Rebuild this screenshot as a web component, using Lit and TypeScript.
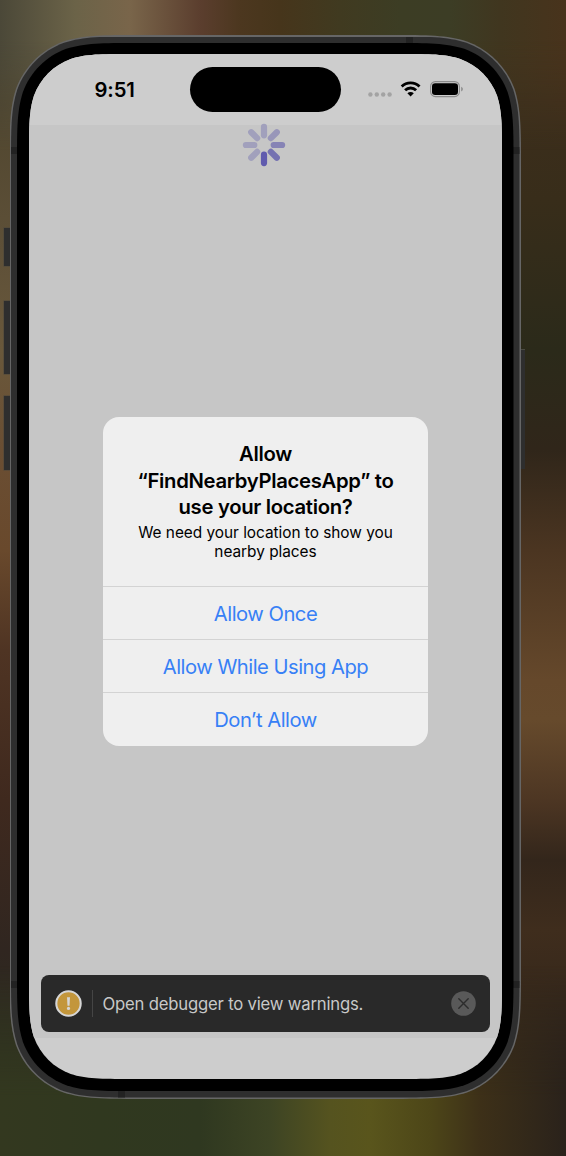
import { LitElement, html, css, svg, unsafeCSS } from "lit";
import { customElement } from "lit/decorators.js";

/** Outline of a rectangle with continuous-curvature corners. */
function squircle(w: number, h: number, r: number) {
  const a = 1.52866 * r, b = 1.08849 * r, c = 0.86841 * r, d = 0.63149 * r;
  const e = 0.07491 * r, f = 0.37282 * r, g = 0.16906 * r;
  const p = (...n: number[]) => n.map((v) => v.toFixed(2)).join(" ");
  return unsafeCSS(
    `path("M${p(a, 0)} L${p(w - a, 0)}` +
      `C${p(w - b, 0, w - c, 0, w - d, e)}C${p(w - f, g, w - g, f, w - e, d)}C${p(w, c, w, b, w, a)}` +
      `L${p(w, h - a)}C${p(w, h - b, w, h - c, w - e, h - d)}C${p(w - g, h - f, w - f, h - g, w - d, h - e)}C${p(w - c, h, w - b, h, w - a, h)}` +
      `L${p(a, h)}C${p(b, h, c, h, d, h - e)}C${p(f, h - g, g, h - f, e, h - d)}C${p(0, h - c, 0, h - b, 0, h - a)}` +
      `L${p(0, a)}C${p(0, b, 0, c, e, d)}C${p(g, f, f, g, d, e)}C${p(c, 0, b, 0, a, 0)}Z")`
  );
}

@customElement("status-bar")
class StatusBar extends LitElement {
  static styles = css`
    :host { display: flex; height: 71px; background: #cdcdcd; position: relative; }
    .time { width: 161px; padding: 21.5px 0 0 65.5px; box-sizing: border-box; font-size: 20.3px; line-height: 28px; font-weight: 600; letter-spacing: -0.15px; }
    .island { width: 151px; height: 44.5px; margin-top: 13px; border-radius: 23px; background: #000; }
    svg { display: block; width: 161px; height: 71px; }
  `;
  render() {
    return html`
      <div class="time">9:51</div>
      <div class="island"></div>
      <svg viewBox="341 54 161 71">
        <g fill="#a3a3a3">
          ${[370.4, 376.8, 383.2, 389.6].map((x) => svg`<circle cx=${x} cy="94.5" r="2.2" />`)}
        </g>
        <g fill="none" stroke="#000" stroke-width="2.9">
          <path d="M401.7 86.5a12.8 12.8 0 0 1 17.8 0" />
          <path d="M405.1 90.2a7.9 7.9 0 0 1 11 0" />
        </g>
        <path d="M410.6 96.6l-3.2-3.3a4.6 4.6 0 0 1 6.4 0z" />
        <rect x="430.6" y="81.6" width="28.8" height="15" rx="4.8" fill="none" stroke="#8b8b8b" stroke-width="1.1" />
        <rect x="432" y="83.2" width="26" height="11.8" rx="3.2" />
        <path d="M461.2 86.8q1.7.7 1.7 2.3t-1.7 2.3z" fill="#8b8b8b" />
      </svg>
    `;
  }
}

@customElement("activity-spinner")
class ActivitySpinner extends LitElement {
  static styles = css`
    :host, svg { display: block; width: 44px; height: 44px; }
  `;
  render() {
    const shades = ["#a1a0bc", "#9896b9", "#8683b5", "#7572b1", "#605bae", "#a1a0bc", "#a1a0bc", "#a1a0bc"];
    return html`<svg viewBox="-22 -22 44 44">
      ${shades.map((c, i) => svg`<rect x="-3.1" y="-21.2" width="6.2" height="14.6" rx="3.1" fill=${c} transform="rotate(${i * 45})" />`)}
    </svg>`;
  }
}

@customElement("permission-alert")
class PermissionAlert extends LitElement {
  static styles = css`
    :host { display: block; width: 325px; height: 328.6px; border-radius: 16px; background: #efefef; overflow: hidden; text-align: center; }
    .message { height: 168.6px; box-sizing: border-box; padding-top: 23.9px; }
    .title { font-size: 20.3px; line-height: 26.4px; font-weight: 600; letter-spacing: -0.32px; white-space: nowrap; }
    .body { margin-top: 3px; font-size: 15.4px; line-height: 19px; white-space: nowrap; letter-spacing: -0.03px; }
    .action { height: 53.33px; box-sizing: border-box; border-top: 1px solid #d3d3d3; color: #3780f6; font-size: 20.2px; line-height: 53px; letter-spacing: -0.5px; white-space: nowrap; }
  `;
  render() {
    return html`
      <div class="message">
        <div class="title">Allow<br />“FindNearbyPlacesApp” to<br />use your location?</div>
        <div class="body">We need your location to show you<br />nearby places</div>
      </div>
      ${["Allow Once", "Allow While Using App", "Don’t Allow"].map((t) => html`<div class="action">${t}</div>`)}
    `;
  }
}

@customElement("debug-toast")
class DebugToast extends LitElement {
  static styles = css`
    :host { display: flex; align-items: center; height: 57px; box-sizing: border-box; padding: 0.5px 14px 0; border-radius: 8px; background: #292929; color: #c8c8c8; }
    svg { display: block; flex: none; }
    .rule { width: 1px; height: 27px; margin: 0 10px 0 9.5px; background: #454545; }
    .text { flex: 1; font-size: 16.7px; line-height: 24px; letter-spacing: -0.2px; white-space: nowrap; }
  `;
  render() {
    return html`
      <svg width="27" height="27" viewBox="0 0 27 27">
        <circle cx="13.5" cy="13.5" r="12.2" fill="#c3963b" stroke="#d6d6d6" stroke-width="2.1" />
        <path d="M12 7.3h3l-.5 8.4h-2z" fill="#d6d6d6" />
        <circle cx="13.5" cy="18.4" r="1.6" fill="#d6d6d6" />
      </svg>
      <div class="rule"></div>
      <div class="text">Open debugger to view warnings.</div>
      <svg width="25" height="25" viewBox="0 0 25 25">
        <circle cx="12.5" cy="12.5" r="12.3" fill="#595959" />
        <path d="M7.8 7.8l9.4 9.4M17.2 7.8l-9.4 9.4" stroke="#2c2c2c" stroke-width="1.4" stroke-linecap="round" />
      </svg>
    `;
  }
}

@customElement("app-root")
class AppRoot extends LitElement {
  static styles = css`
    :host { display: block; position: relative; width: 566px; height: 1156px; overflow: hidden; box-sizing: border-box; padding: 35px 0 0 9.5px; font-family: Inter, "Liberation Sans", sans-serif; color: #000; background: #33291c; }
    .wall { position: absolute; }
    .left { inset: 0 283px 0 0; background: linear-gradient(#4b4838 0, #50462f 100px, #5e5038 250px, #69583b 350px, #6a4e33 450px, #69492c 550px, #4f3423 650px, #3f291e 800px, #302620 950px, #2c2c20 1050px, #333822 1156px); }
    .right { inset: 0 0 0 283px; background: linear-gradient(#48331c 0, #3c2e1c 100px, #382d1a 200px, #2b2a1a 350px, #30261a 450px, #4b3521 550px, #65482b 680px, #664a2c 720px, #4d3623 800px, #33261b 860px, #3f2d1d 930px, #36281b 1000px, #2c231b 1100px); }
    .top { inset: 0 0 auto 0; height: 150px; background: linear-gradient(90deg, #4b4838 0, #6b6348 75px, #79654a 130px, #5b3e2e 200px, #4c371f 240px, #46351b 280px, #403a20 340px, #3c3d24 400px, #3c3d25 450px, #40361f 500px, #48331c 566px); mask-image: linear-gradient(#000 40px, transparent); }
    .bottom { inset: auto 0 0 0; height: 190px; background: linear-gradient(90deg, #33381f 0, #30381f 100px, #2f3820 200px, #3d4424 270px, #55531f 330px, #59551c 370px, #4d4618 430px, #3d3018 480px, #2a221b 566px); mask-image: linear-gradient(transparent, #000 130px); }
    .key { position: absolute; background: #2e2e2e; box-shadow: 0 0 0 0.5px #4a463c; }
    .k1 { left: 4px; top: 228px; width: 7px; height: 38px; }
    .k2 { left: 4px; top: 301px; width: 7px; height: 73px; }
    .k3 { left: 4px; top: 396px; width: 7px; height: 74px; }
    .k4 { left: 518px; top: 350px; width: 6.5px; height: 118.5px; box-shadow: 0 -1px 0 #4a4a42; }
    .rim { position: relative; width: 511.5px; height: 1064px; box-sizing: border-box; padding: 1.5px; background: #666; clip-path: ${squircle(511.5, 1064, 85.5)}; }
    .frame { position: relative; width: 508.5px; height: 1061px; box-sizing: border-box; padding: 6.5px 6px; background: #2e2e2e; clip-path: ${squircle(508.5, 1061, 84)}; }
    .bezel { position: relative; width: 496.5px; height: 1048px; box-sizing: border-box; padding: 11px 12px 12px; background: #000; clip-path: ${squircle(496.5, 1048, 78)}; }
    .screen { display: flex; flex-direction: column; position: relative; width: 473px; height: 1025px; background: #cdcdcd; clip-path: ${squircle(473, 1025, 66)}; }
    .content { height: 913px; display: flex; align-items: center; justify-content: center; background: #c6c6c6; }
    .spinner { position: absolute; left: 213px; top: 69px; }
    .toast { position: absolute; left: 12px; right: 12px; top: 921px; }
    .band { position: absolute; background: #222; }
    .b1 { left: 395px; top: 0; width: 7px; height: 7px; }
    .b2 { left: 107px; bottom: 0; width: 7px; height: 7px; }
    .b3 { left: 0; right: 0; top: 110.5px; height: 7px; }
    .b4 { left: 0; right: 0; top: 944.5px; height: 7px; }
  `;
  render() {
    return html`
      <div class="wall left"></div>
      <div class="wall right"></div>
      <div class="wall top"></div>
      <div class="wall bottom"></div>
      ${[1, 2, 3, 4].map((n) => html`<div class="key k${n}"></div>`)}
      <div class="rim">
        <div class="frame">
          ${[1, 2, 3, 4].map((n) => html`<div class="band b${n}"></div>`)}
          <div class="bezel">
            <div class="screen">
              <status-bar></status-bar>
              <div class="content"><permission-alert></permission-alert></div>
              <activity-spinner class="spinner"></activity-spinner>
              <debug-toast class="toast"></debug-toast>
            </div>
          </div>
        </div>
      </div>
    `;
  }
}
